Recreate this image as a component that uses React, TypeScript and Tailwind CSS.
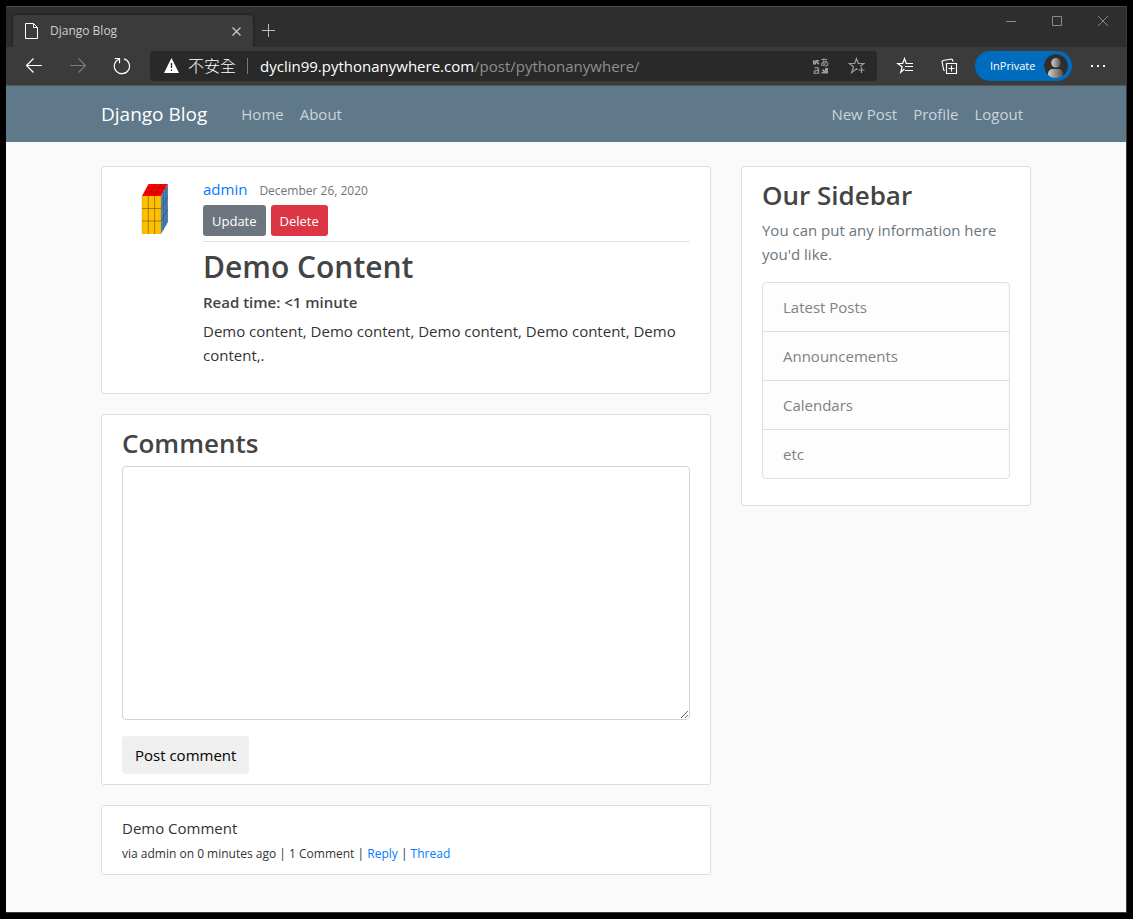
import React from "react";

type IconProps = { label: string; className?: string; children: React.ReactNode };

function IconButton({ label, className = "", children }: IconProps) {
  return (
    <button aria-label={label} className={`flex shrink-0 items-center justify-center ${className}`}>
      {children}
    </button>
  );
}

function PageIcon() {
  return (
    <svg width="13" height="16" viewBox="0 0 13 16" fill="none" stroke="#fff" className="shrink-0">
      <path d="M.5.5h8l4 4v11H.5z" />
      <path d="M8.5.5v4h4" />
    </svg>
  );
}

function TabStrip() {
  return (
    <header className="flex h-[41px] items-start border-t border-[#4a4a4a] bg-[#2e2e2e]">
      <div className="ml-[7px] mt-2 flex h-8 w-60 items-center rounded-t bg-[#3b3b3b] pl-3 pr-[11px] shadow-[0_0_3px_rgba(0,0,0,0.6)]">
        <PageIcon />
        <span className="ml-3 flex-1 text-xs text-[#d0d0d0]">Django Blog</span>
        <IconButton label="Close tab">
          <svg width="11" height="11" viewBox="0 0 11 11" stroke="#c8c8c8" strokeWidth="1.3">
            <path d="M1.5 1.5l8 8M9.5 1.5l-8 8" />
          </svg>
        </IconButton>
      </div>
      <IconButton label="New tab" className="ml-[9px] mt-[17px]">
        <svg width="13" height="13" viewBox="0 0 13 13" stroke="#bdbdbd">
          <path d="M6.5 0v13M0 6.5h13" />
        </svg>
      </IconButton>
      <div className="ml-auto flex">
        <IconButton label="Minimize" className="h-7 w-[46px]">
          <svg width="10" height="10" viewBox="0 0 10 10" stroke="#8a8a8a">
            <path d="M0 5.5h10" />
          </svg>
        </IconButton>
        <IconButton label="Maximize" className="h-7 w-[46px]">
          <svg width="10" height="10" viewBox="0 0 10 10" stroke="#8a8a8a" fill="none">
            <path d="M.5.5h9v9h-9z" />
          </svg>
        </IconButton>
        <IconButton label="Close" className="h-7 w-[46px]">
          <svg width="10" height="10" viewBox="0 0 10 10" stroke="#8a8a8a">
            <path d="M0 0l10 10M10 0L0 10" />
          </svg>
        </IconButton>
      </div>
    </header>
  );
}

function Toolbar() {
  return (
    <div className="flex h-[39px] items-center border-b border-[#555] bg-[#3b3b3b] px-[6px]">
      <IconButton label="Back" className="h-[30px] w-11">
        <svg width="18" height="16" viewBox="0 0 18 16" fill="none" stroke="#fff" strokeWidth="1.2">
          <path d="M17 7.500H1.500M8.500.5l-7 7 7 7" />
        </svg>
      </IconButton>
      <IconButton label="Forward" className="h-[30px] w-11">
        <svg width="18" height="16" viewBox="0 0 18 16" fill="none" stroke="#7c7c7c" strokeWidth="1.1">
          <path d="M1 7.500h15.500M9.500.5l7 7-7 7" />
        </svg>
      </IconButton>
      <IconButton label="Refresh" className="h-[30px] w-11">
        <svg width="18" height="18" viewBox="0 0 18 18" fill="none" stroke="#fff" strokeWidth="1.200">
          <path d="M11 1.800A7.600 7.600 0 1 1 6.200 2" />
          <path d="M1.700 1.500h4.800v4.800" />
        </svg>
      </IconButton>
      <div className="ml-[6px] flex h-[30px] min-w-0 flex-1 items-center rounded bg-[#292929] pl-[14px]">
        <svg width="16" height="16" viewBox="0 0 16 16" className="shrink-0">
          <path d="M7.500 0L15 15H0z" fill="#fff" />
          <path d="M7.500 5v5M7.500 11.500V13" stroke="#292929" strokeWidth="1.300" />
        </svg>
        <span className="ml-2 text-base leading-5 font-light whitespace-nowrap text-white">不安全</span>
        <span className="ml-[11px] h-4 w-px bg-[#777]" />
        <span className="ml-3 flex min-w-0 flex-1 text-[15px] leading-5 whitespace-nowrap">
          <span className="text-white">dyclin99.pythonanywhere.com</span>
          <span className="text-[#8f8f8f]">/post/pythonanywhere/</span>
        </span>
        <IconButton label="Translate" className="h-[30px] w-9">
          <svg width="16" height="17" viewBox="0 0 16 17" fill="#9a9a9a" className="overflow-visible">
            <text x="7" y="8" fontSize="9" fontWeight="500">あ</text>
            <text x="0" y="16" fontSize="12" fontWeight="600">a</text>
            <path d="M0 2h1.500v1.800L3 2h3v1.500H4.200l2.300 2-1.200 1.200L3 4.800v1.700H0zM15 15.500H8.500V14h2L8.800 12.200 10 11l2 1.800V10h3z" />
          </svg>
        </IconButton>
        <IconButton label="Add to favorites" className="mr-[2px] h-[30px] w-9">
          <svg width="18" height="18" viewBox="0 0 18 18" fill="none" stroke="#9a9a9a" strokeWidth="1.200">
            <path d="M9.500 12.500l-1-.7-4.800 3.700 1.800-5.800L1.200 6.500h5.500L8.500 1.500l1.800 5h5.500l-3.600 2.800" />
            <path d="M13.500 10v6M10.500 13h6" />
          </svg>
        </IconButton>
      </div>
      <IconButton label="Favorites" className="ml-[6px] h-[30px] w-11">
        <svg width="18" height="18" viewBox="0 0 18 18" fill="none" stroke="#fff" strokeWidth="1.200">
          <path d="M8.500 12L4.700 15.300l1.500-5.600L1.700 6.500h5L8.500 1.500l1.800 5" />
          <path d="M10 6.500h7M9 9.500h8M9 13.500h8" />
        </svg>
      </IconButton>
      <IconButton label="Collections" className="h-[30px] w-11">
        <svg width="17" height="17" viewBox="0 0 17 17" fill="none" stroke="#fff" strokeWidth="1.100">
          <path d="M5.500 5.500h10v10h-10zM10.500 7.500v6M7.500 10.500h6" />
          <path d="M3.800 12.500L2.700 12 1 3.500l1-1L10.500 1l1 .7.500 2" />
        </svg>
      </IconButton>
      <button className="ml-1 flex h-[30px] w-[97px] shrink-0 items-center justify-between rounded-full bg-[#006cbe] pl-[15px] pr-1 text-[11px] text-white">
        <span>InPrivate</span>
        <svg width="24" height="24" viewBox="0 0 24 24">
          <defs>
            <linearGradient id="avatarShade" x1="0" x2="1">
              <stop offset="0.1" stopColor="#c9c5c3" />
              <stop offset="1" stopColor="#55504e" />
            </linearGradient>
            <clipPath id="avatarClip">
              <circle cx="12" cy="12" r="12" />
            </clipPath>
          </defs>
          <g clipPath="url(#avatarClip)">
            <circle cx="12" cy="12" r="12" fill="#302e2d" />
            <circle cx="12" cy="8.800" r="4.800" fill="url(#avatarShade)" />
            <path d="M4 24v-4c0-3 2-5 5-5h5c3 0 5 2 5 5v4z" fill="url(#avatarShade)" />
          </g>
        </svg>
      </button>
      <IconButton label="Settings and more" className="ml-1 h-[30px] w-11">
        <svg width="16" height="4" viewBox="0 0 16 4" fill="#fff">
          <path d="M1 1h2v2H1zM7 1h2v2H7zM13 1h2v2h-2z" />
        </svg>
      </IconButton>
    </div>
  );
}

function Avatar() {
  return (
    <svg width="65" height="65" viewBox="0 0 65 65" role="img" aria-label="admin" className="mr-4 shrink-0">
      <path d="M20 19h19v38H20z" fill="#ffc000" />
      <path d="M20 19l6.500-12H46l-7 12z" fill="#f40606" />
      <path d="M39 19l7-12v38l-7 12z" fill="#4d84b8" />
      <path d="M26.300 19v38M32.600 19v38M20 31.500h19M20 44h19" stroke="#6b5200" strokeOpacity="0.6" fill="none" />
      <path d="M39 31.500l7-12M39 44l7-12M41.500 15v38M43.800 11v38" stroke="#1f4468" strokeOpacity="0.45" fill="none" />
      <path d="M26.300 19l6.500-12M32.600 19l6.600-12M22.500 15h19M24.500 11h19" stroke="#8d0000" strokeOpacity="0.4" fill="none" />
      <path d="M20 19v38M39 19v38" stroke="#a87c00" strokeOpacity="0.3" />
    </svg>
  );
}

const card = "mb-5 rounded-[3px] border border-[#ddd] bg-white px-5 py-[10px]";
const navLink = "p-2 text-[#cbd5db]";
const sidebarItems = ["Latest Posts", "Announcements", "Calendars", "etc"];

export default function App() {
  return (
    <div className="flex min-h-screen flex-col bg-black px-[6px] pt-[6px] pb-[6px] font-['Open_Sans','Noto_Sans_CJK_TC',sans-serif] text-[15px] leading-6 text-[#333]">
      <div className="flex flex-1 flex-col border-r border-b border-[#3b3b3b] bg-[#fafafa]">
        <TabStrip />
        <Toolbar />
        <nav className="bg-[#5f788a]">
          <div className="mx-auto flex h-14 max-w-[960px] items-center px-[15px]">
            <a href="#" className="mr-[26px] text-[19px] text-white">Django Blog</a>
            <a href="#" className={navLink}>Home</a>
            <a href="#" className={navLink}>About</a>
            <div className="ml-auto flex">
              <a href="#" className={navLink}>New Post</a>
              <a href="#" className={navLink}>Profile</a>
              <a href="#" className={navLink}>Logout</a>
            </div>
          </div>
        </nav>
        <main className="mx-auto mt-6 flex w-full max-w-[960px] items-start">
          <div className="w-2/3 px-[15px]">
            <article className={`flex ${card}`}>
              <Avatar />
              <div className="min-w-0 flex-1">
                <div className="mb-1 border-b border-[#e3e3e3] pb-[5px]">
                  <a href="#" className="mr-3 text-[#007bff]">admin</a>
                  <small className="text-xs text-[#6c757d]">December 26, 2020</small>
                  <div className="mt-1 flex gap-[5px] text-[13px] text-white">
                    <a href="#" className="flex h-[31px] items-center rounded-[3px] bg-[#6c757d] px-[9px]">Update</a>
                    <a href="#" className="flex h-[31px] items-center rounded-[3px] bg-[#dc3545] px-[9px]">Delete</a>
                  </div>
                </div>
                <h2 className="text-[30px] leading-[42px] font-semibold text-[#444]">Demo Content</h2>
                <h6 className="mt-[2px] mb-[5px] text-[15px] leading-6 font-semibold text-[#444]">Read time: &lt;1 minute</h6>
                <p className="mb-4">Demo content, Demo content, Demo content, Demo content, Demo content,.</p>
              </div>
            </article>
            <section className={card}>
              <h3 className="mb-1 text-[26px] leading-[37px] font-semibold text-[#444]">
                <label htmlFor="comment">Comments</label>
              </h3>
              <textarea id="comment" rows={10} className="block w-full resize rounded border border-[#ced4da] bg-white px-3 py-[6px] text-base leading-6" />
              <button className="mt-4 h-[38px] rounded bg-[#efefef] px-[13px] text-black">Post comment</button>
            </section>
            <section className={card}>
              <p>Demo Comment</p>
              <p className="mt-1 text-xs leading-5">
                via admin on 0 minutes ago | 1 Comment | <a href="#" className="text-[#007bff]">Reply</a> |{" "}
                <a href="#" className="text-[#007bff]">Thread</a>
              </p>
            </section>
          </div>
          <aside className="w-1/3 px-[15px]">
            <div className={card}>
              <h3 className="mb-1 text-[26px] leading-[37px] font-semibold text-[#444]">Our Sidebar</h3>
              <p className="mb-4 text-[#6c757d]">You can put any information here you'd like.</p>
              <ul className="mb-4 divide-y divide-[#dfdfdf] rounded border border-[#dfdfdf] bg-[#fdfdfe] text-[#818182]">
                {sidebarItems.map((item) => (
                  <li key={item} className="px-5 py-3">{item}</li>
                ))}
              </ul>
            </div>
          </aside>
        </main>
      </div>
    </div>
  );
}
